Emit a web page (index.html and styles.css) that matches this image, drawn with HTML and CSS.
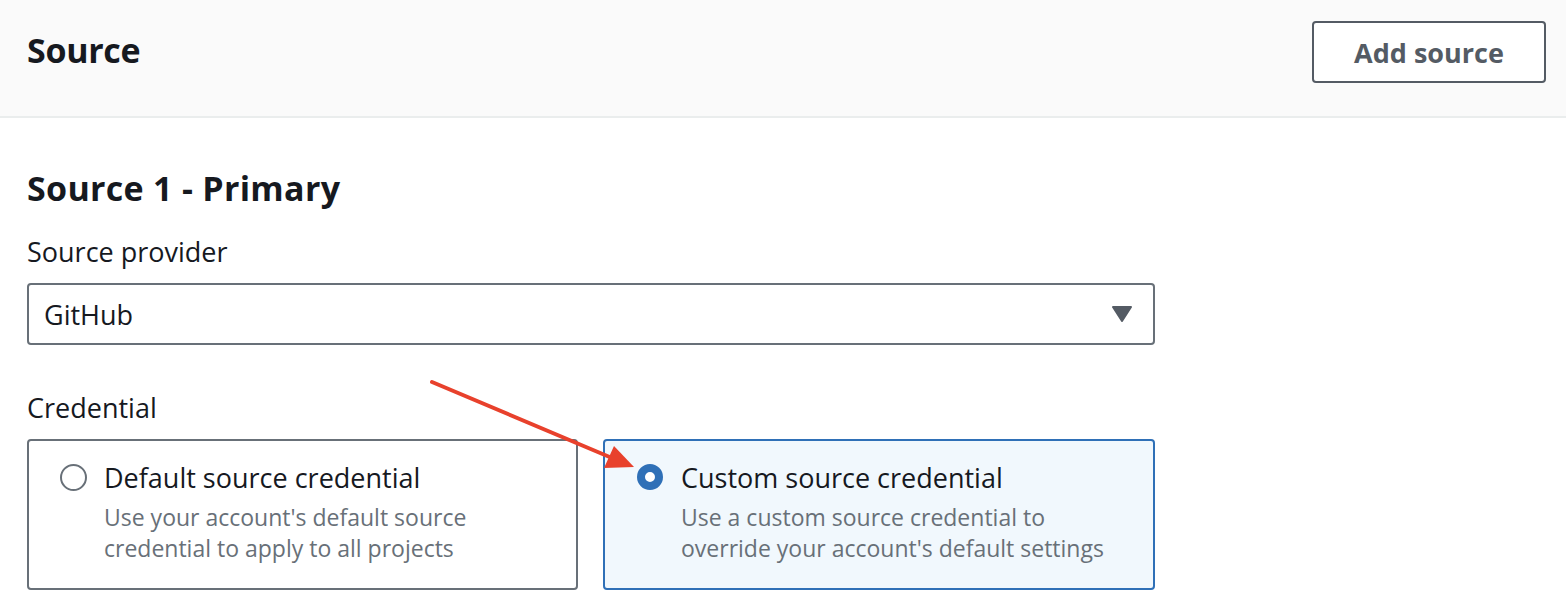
FILE: index.html
```html
<!DOCTYPE html>
<html>
<head>
<meta charset="utf-8">
<link rel="stylesheet" href="styles.css">
</head>
<body>
<div class="page">
  <header class="header">
    <h2 class="header-title">Source</h2>
    <button class="btn">Add source</button>
  </header>
  <main class="content">
    <h3 class="section-title">Source 1 - Primary</h3>
    <div class="field">
      <label class="label">Source provider</label>
      <div class="select">
        <span class="select-value">GitHub</span>
        <svg class="caret" width="20" height="16" viewBox="0 0 20 16"><path d="M1 1 H19 L10 15 Z" fill="#545b64" stroke="#545b64" stroke-width="2" stroke-linejoin="round"/></svg>
      </div>
    </div>
    <div class="field">
      <label class="label">Credential</label>
      <div class="tiles">
        <div class="tile">
          <span class="radio"></span>
          <div class="tile-text">
            <div class="tile-title">Default source credential</div>
            <div class="tile-desc">Use your account's default source<br>credential to apply to all projects</div>
          </div>
        </div>
        <div class="tile tile-selected">
          <span class="radio radio-checked"></span>
          <div class="tile-text">
            <div class="tile-title">Custom source credential</div>
            <div class="tile-desc">Use a custom source credential to<br>override your account's default settings</div>
          </div>
        </div>
      </div>
    </div>
  </main>
  <svg class="annotation" width="1566" height="616" viewBox="0 0 1566 616">
    <line x1="432" y1="382" x2="612" y2="458" stroke="#e8412c" stroke-width="4" stroke-linecap="round"/>
    <polygon points="634,467 604,468 614,446" fill="#e8412c"/>
  </svg>
</div>
</body>
</html>
```
FILE: styles.css
```css
* { box-sizing: border-box; }
html, body { margin: 0; padding: 0; background: #fff; }
body {
  font-family: "Open Sans", "Noto Sans", sans-serif;
  color: #16191f;
  width: 1566px;
  height: 616px;
  overflow: hidden;
}
.page { position: relative; width: 1566px; height: 616px; }
.header {
  height: 118px;
  background: #fafafa;
  border-bottom: 2px solid #eaeded;
  display: flex;
  align-items: center;
  justify-content: space-between;
  padding: 0 20px 0 27px;
}
.header-title {
  margin: 0;
  font-size: 34px;
  font-weight: 700;
  letter-spacing: -0.3px;
  position: relative;
  top: -8px;
}
.btn {
  width: 234px;
  height: 62px;
  border: 2px solid #545b64;
  border-radius: 4px;
  background: #fff;
  color: #545b64;
  font-family: inherit;
  font-size: 27px;
  font-weight: 700;
  padding: 0;
  position: relative;
  top: -6px;
}
.content { padding: 50px 0 0 27px; width: 1155px; }
.section-title {
  margin: 0 0 27px;
  font-size: 34px;
  font-weight: 700;
  line-height: 40px;
  letter-spacing: 0.3px;
}
.field { margin-bottom: 46px; }
.label {
  display: block;
  font-size: 27px;
  line-height: 34px;
  margin-bottom: 14px;
}
.select {
  height: 62px;
  border: 2px solid #687078;
  border-radius: 4px;
  display: flex;
  align-items: center;
  justify-content: space-between;
  padding: 0 21px 0 15px;
  font-size: 27px;
}
.caret { display: block; }
.tiles {
  display: grid;
  grid-template-columns: 551px 552px;
  column-gap: 25px;
}
.tile {
  height: 151px;
  border: 2px solid #687078;
  border-radius: 4px;
  display: flex;
  align-items: flex-start;
  padding: 21px 16px 0 31px;
}
.tile-selected {
  border-color: #2f70b7;
  background: #f1f8fd;
}
.radio {
  width: 27px;
  height: 27px;
  border: 2px solid #687078;
  border-radius: 50%;
  flex: none;
  margin-top: 2px;
  margin-right: 17px;
  background: #fff;
}
.radio-checked {
  width: 26px;
  height: 26px;
  border: 8px solid #2f70b7;
  background: #fff;
  margin-left: 1px;
  margin-right: 18px;
}
.tile-title {
  font-size: 27px;
  line-height: 32px;
}
.tile-desc {
  font-size: 23px;
  line-height: 31px;
  color: #687078;
  margin-top: 8px;
}
.annotation {
  position: absolute;
  left: 0;
  top: 0;
  pointer-events: none;
}
```
